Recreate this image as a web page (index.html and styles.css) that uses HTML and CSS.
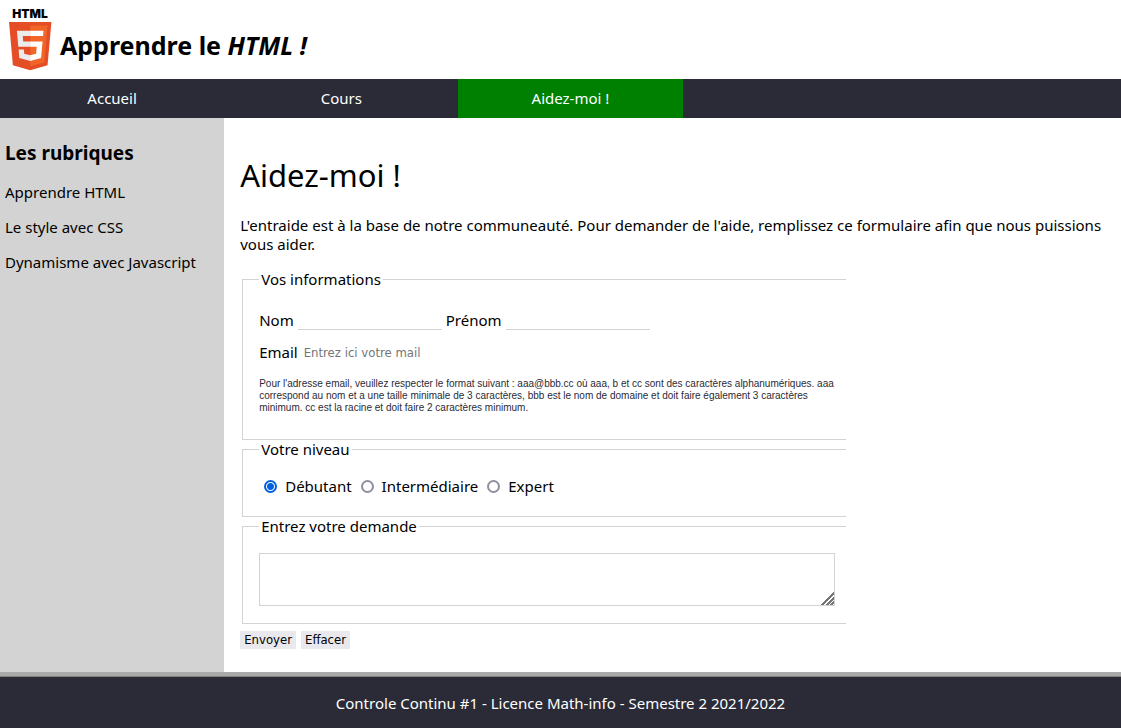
FILE: index.html
```html
<!DOCTYPE html>
<html lang="fr">
<head>
<meta charset="utf-8">
<title>Aidez-moi !</title>
<link rel="stylesheet" href="styles.css">
</head>
<body>
<header class="banner">
  <svg class="logo" viewBox="0 0 60 60" role="img" aria-label="HTML5">
    <text class="logo-text" x="30" y="8" text-anchor="middle">HTML</text>
    <g transform="translate(6.2 12) scale(.094)">
      <path fill="#e44d26" d="M71 460 30 0h451l-41 460-185 52z"/>
      <path fill="#f16529" d="m256 472 149-41 35-394H256z"/>
      <path fill="#ebebeb" d="M256 208h-75l-5-58h80V94H114l1 15 14 155h127zM256 355l-64-17-4-45h-56l7 89 117 32z"/>
      <path fill="#fff" d="M255 208v56h70l-7 74-63 17v59l116-32 1-10 13-149 2-15zM255 94v56h137l1-12 3-29 1-15z"/>
    </g>
  </svg>
  <h1 class="site-title">Apprendre le <em>HTML !</em></h1>
</header>
<nav class="menu">
  <a class="menu-item" href="#">Accueil</a>
  <a class="menu-item" href="#">Cours</a>
  <a class="menu-item active" href="#">Aidez-moi !</a>
</nav>
<div class="columns">
  <aside class="topics">
    <h2 class="topics-title">Les rubriques</h2>
    <a class="topic" href="#">Apprendre HTML</a>
    <a class="topic" href="#">Le style avec CSS</a>
    <a class="topic" href="#">Dynamisme avec Javascript</a>
  </aside>
  <main class="content">
    <h2 class="page-title">Aidez-moi !</h2>
    <p class="intro">L'entraide est à la base de notre communeauté. Pour demander de l'aide, remplissez ce formulaire afin que nous puissions vous aider.</p>
    <form class="help-form">
      <fieldset class="group info">
        <legend>Vos informations</legend>
        <div class="row">
          <label for="nom">Nom</label>
          <input class="field" id="nom" type="text">
          <label for="prenom">Prénom</label>
          <input class="field" id="prenom" type="text">
        </div>
        <div class="row">
          <label for="email">Email</label>
          <input class="field email" id="email" type="email" placeholder="Entrez ici votre mail">
        </div>
        <p class="hint">Pour l'adresse email, veuillez respecter le format suivant : aaa@bbb.cc où aaa, b et cc sont des caractères alphanumériques. aaa correspond au nom et a une taille minimale de 3 caractères, bbb est le nom de domaine et doit faire également 3 caractères minimum. cc est la racine et doit faire 2 caractères minimum.</p>
      </fieldset>
      <fieldset class="group level">
        <legend>Votre niveau</legend>
        <div class="choices">
          <label class="choice"><input class="radio" type="radio" name="niveau" checked>Débutant</label>
          <label class="choice"><input class="radio" type="radio" name="niveau">Intermédiaire</label>
          <label class="choice"><input class="radio" type="radio" name="niveau">Expert</label>
        </div>
      </fieldset>
      <fieldset class="group request">
        <legend>Entrez votre demande</legend>
        <textarea class="message" aria-label="Entrez votre demande"></textarea>
      </fieldset>
      <div class="actions">
        <button class="button" type="submit">Envoyer</button>
        <button class="button" type="reset">Effacer</button>
      </div>
    </form>
  </main>
</div>
<footer class="footer">Controle Continu #1 - Licence Math-info - Semestre 2 2021/2022</footer>
</body>
</html>
```
FILE: styles.css
```css
* {
  box-sizing: border-box;
}

body {
  display: flex;
  flex-direction: column;
  min-height: 100vh;
  margin: 0;
  background: #fff;
  color: #000;
  font-family: Tahoma, "Noto Sans", sans-serif;
  font-size: 15px;
  line-height: 19px;
}

a {
  color: inherit;
  text-decoration: none;
}

.banner {
  display: flex;
  align-items: center;
  padding: 10px 0 9px;
}

.logo {
  width: 60px;
  height: 60px;
  overflow: visible;
}

.logo-text {
  font: 900 12px Inter, sans-serif;
}

.site-title {
  margin: 10px 0 0;
  font-size: 25px;
  line-height: 30px;
}

.menu {
  display: flex;
  gap: 5px;
  background: #2a2b37;
  color: #fff;
}

.menu-item {
  width: 20%;
  padding: 10px;
  text-align: center;
}

.active {
  background: #008000;
}

.columns {
  display: flex;
  flex: 1;
}

.topics {
  display: flex;
  flex-direction: column;
  gap: 16px;
  width: 20%;
  padding: 24px 5px;
  background: #d3d3d3;
}

.topics-title {
  margin: 0 0 3px;
  font-size: 19px;
  line-height: 22px;
}

.content {
  flex: 1;
  padding: 38px 16px 23px;
}

.page-title {
  margin: 0 0 21px;
  font-size: 31px;
  font-weight: 400;
  line-height: 39px;
}

.intro {
  margin: 0 0 16px;
}

.help-form {
  width: 70%;
}

.group {
  min-width: 0;
  margin: 0 0 0 2px;
  padding: 0 11px 16px 16px;
  border: 1px solid #d3d3d3;
  border-right: 0;
}

.group legend {
  padding: 0 2px;
}

.info {
  padding-top: 22px;
  padding-bottom: 25px;
}

.row {
  display: flex;
  align-items: center;
  gap: 4px;
  margin-bottom: 13px;
}

.field {
  width: 144px;
  height: 19px;
  padding: 1px 2px;
  border: 0;
  border-bottom: 1px solid #d3d3d3;
  background: transparent;
  font: 13px/16px Tahoma, "DejaVu Sans Condensed", sans-serif;
}

.email {
  border-color: transparent;
}

.field::placeholder {
  color: #757575;
}

.hint {
  margin: 16px 0 0;
  color: #2a2b37;
  font-family: Tahoma, "Liberation Sans", sans-serif;
  font-size: 10px;
  line-height: 12px;
}

.level {
  padding-top: 18px;
  padding-bottom: 20px;
}

.choices {
  display: flex;
  gap: 9px;
  padding-left: 5px;
}

.choice {
  display: flex;
  align-items: center;
  gap: 8px;
}

.radio {
  appearance: none;
  width: 13px;
  height: 13px;
  margin: 0;
  border: 2px solid #8f8f9d;
  border-radius: 50%;
  background: #fff;
}

.radio:checked {
  border-color: #0060df;
  background: radial-gradient(circle, #0060df 3px, #fff 4px);
}

.request {
  padding-top: 17px;
  padding-bottom: 17px;
}

.message {
  display: block;
  width: 100%;
  height: 53px;
  border: 1px solid #d3d3d3;
  background: #fff;
  font: inherit;
}

.message::-webkit-resizer {
  background: linear-gradient(135deg, #fff 50%, transparent 50%), repeating-linear-gradient(135deg, #777 0 2px, #fff 2px 3px);
}

.actions {
  display: flex;
  gap: 5px;
  margin-top: 7px;
}

.button {
  padding: 1px 4px;
  border: 0;
  background: #e9e9ed;
  color: #000;
  font: 13px/16px Tahoma, "DejaVu Sans Condensed", sans-serif;
}

.footer {
  padding: 18px 16px 15px;
  border-top: 4px solid #a9a9a9;
  background: #2a2b37;
  box-shadow: inset 0 1px #7f7f7f;
  color: #fff;
  text-align: center;
}
```
